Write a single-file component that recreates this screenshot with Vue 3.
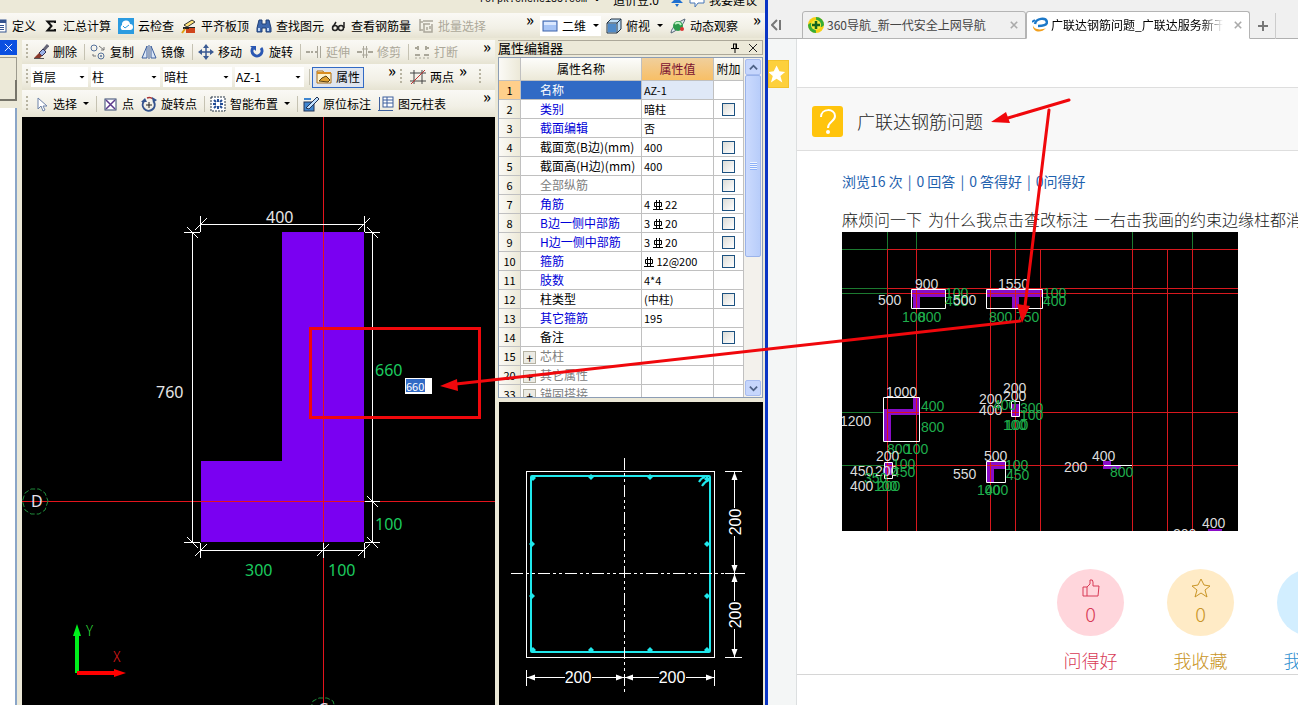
<template>
  <div class="desktop">
    <section class="cad">
      <header class="title-strip">
        <span class="host">forpk.chenei85.com</span>
        <span>·</span>
        <span class="beans">造价豆:0</span>
        <svg class="icon" viewBox="0 0 16 16" v-html="icons.bell"></svg>
        <svg class="icon" viewBox="0 0 16 16" v-html="icons.bubble"></svg>
        <span>我要建议</span>
      </header>

      <div class="main-bar">
        <div class="toolbar first-bar">
          <button v-for="b in mainTools" :key="b.text" class="tool" :disabled="b.off">
            <svg class="icon" viewBox="0 0 16 16" v-html="icons[b.icon]"></svg>{{ b.text }}
          </button>
          <button class="more" aria-label="更多命令">»</button>
        </div>
        <div class="toolbar view-bar">
          <button class="tool view-mode">
            <svg class="icon" viewBox="0 0 16 16" v-html="icons.plane"></svg>二维<i class="caret"></i>
          </button>
          <button class="tool">
            <svg class="icon" viewBox="0 0 16 16" v-html="icons.cube"></svg>俯视<i class="caret"></i>
          </button>
          <button class="tool">
            <svg class="icon" viewBox="0 0 16 16" v-html="icons.orbit"></svg>动态观察
          </button>
          <button class="more" aria-label="更多视图">»</button>
        </div>
      </div>

      <div class="body">
        <aside class="dock">
          <button class="dock-close" aria-label="关闭">
            <svg viewBox="0 0 10 10"><path d="M1 1l8 8M9 1l-8 8" stroke="#fff" fill="none" /></svg>
          </button>
          <div class="dock-head"></div>
          <div class="dock-tab"></div>
          <div class="dock-list"></div>
        </aside>

        <div class="work">
          <div class="toolbar edit-bar">
            <i class="grip"></i>
            <template v-for="(b, i) in editTools" :key="i">
              <i v-if="b.sep" class="sep"></i>
              <button v-else class="tool" :disabled="b.off">
                <svg class="icon" viewBox="0 0 16 16" v-html="icons[b.icon]"></svg>{{ b.text }}
              </button>
            </template>
            <button class="more" aria-label="更多编辑">»</button>
          </div>

          <div class="toolbar pick-bar">
            <i class="grip"></i>
            <label v-for="p in pickers" :key="p.label" class="pick" :class="{ narrow: p.narrow }">
              <select v-model="p.value" :aria-label="p.label">
                <option>{{ p.value }}</option>
              </select>
            </label>
            <i class="sep"></i>
            <button class="tool pressed">
              <svg class="icon" viewBox="0 0 16 16" v-html="icons.props"></svg>属性
            </button>
            <button class="more inline" aria-label="更多构件">»</button>
            <i class="grip"></i>
            <button class="tool two-point">
              <svg class="icon" viewBox="0 0 16 16" v-html="icons.axis"></svg>两点
            </button>
            <button class="more tight" aria-label="更多轴线">»</button>
            <i class="grip"></i>
          </div>

          <div class="toolbar draw-bar">
            <i class="grip"></i>
            <template v-for="(b, i) in drawTools" :key="i">
              <i v-if="b.sep" class="sep"></i>
              <button v-else class="tool">
                <svg class="icon" viewBox="0 0 16 16" v-html="icons[b.icon]"></svg>{{ b.text }}<i v-if="b.menu" class="caret"></i>
              </button>
            </template>
            <button class="more" aria-label="更多绘图">»</button>
          </div>

          <div class="canvas">
            <svg class="fill" viewBox="22 117 473 588">
              <polygon points="282,232 364,232 364,542 201,542 201,461 282,461" fill="#7a00f2" />
              <path d="M323 117h1v588h-1zM22 501h473v1H22z" fill="#e4141c" />
              <g stroke="#fff" fill="none">
                <path d="M200.500 224.500H364.500M192.500 232V542M372.500 232V542M200.500 550.500H364.500" />
                <path d="M200.500 216v16M364.500 216v16M184 232.500h16M365 232.500h15M184 542.500h16M365 542.500h15M365 501.500h15M200.500 543v15M323.500 543v15M364.500 543v15" />
                <path v-for="(t, i) in slashes" :key="i" :d="t" />
              </g>
              <g class="dims">
                <text v-for="(d, i) in columnDims" :key="i" :x="d[0]" :y="d[1]" :class="d[3]">{{ d[2] }}</text>
              </g>
              <g fill="none" stroke="#1f8a3a" stroke-dasharray="5 2">
                <polygon points="48,501 45,510 39,514 31,514 25,510 22.500,501 25,493 31,489 39,489 45,493" />
                <polygon points="336,711 333,701 327,698 319,698 313,701 310,711" />
              </g>
              <text class="axis-name" x="31" y="507">D</text>
              <text class="axis-name" x="318" y="715">C</text>
              <path d="M77 673V634" stroke="#00f01c" stroke-width="4" />
              <path d="M77 624l4 12h-8z" fill="#00f01c" />
              <path d="M77 673h38" stroke="#f00" stroke-width="4" />
              <path d="M126 673l-12 4v-8z" fill="#f00" />
              <text class="ucs y" x="86" y="636">Y</text>
              <text class="ucs x" x="113" y="662">X</text>
            </svg>
            <input v-model="offset" class="offset" aria-label="标注值" />
          </div>
        </div>

        <div class="side">
          <div class="side-title">
            <span>属性编辑器</span>
            <button aria-label="固定">
              <svg viewBox="0 0 10 10"><path d="M3 1h4M3.500 1v4M6.500 1v4M6 1v4M1 5.500h8M5 6v4" stroke="#000" fill="none" /></svg>
            </button>
            <button aria-label="关闭面板">
              <svg viewBox="0 0 10 10"><path d="M1 1l8 8M9 1l-8 8" stroke="#222" fill="none" /></svg>
            </button>
          </div>

          <div class="prop-box">
            <div class="prop-scroll">
              <table class="props">
                <thead>
                  <tr>
                    <th class="no"></th>
                    <th>属性名称</th>
                    <th class="val hot">属性值</th>
                    <th class="extra">附加</th>
                  </tr>
                </thead>
                <tbody>
                  <tr v-for="r in rows" :key="r.no" :class="{ current: r.no === 1 }">
                    <td class="no">{{ r.no }}</td>
                    <td class="name" :class="[r.tone, { group: r.group }]">
                      <button v-if="r.group" class="plus" aria-label="展开">+</button>{{ r.name }}
                    </td>
                    <td class="val">
                      <template v-if="r.bar">
                        {{ r.count }}
                        <svg class="rebar" viewBox="0 0 10 10"><path d="M1.500 2.500h7v4h-7zM3.500 0v9M6.500 0v9M0 9.500h10" stroke="#000" fill="none" /></svg>
                        {{ r.bar }}
                      </template>
                      <template v-else>{{ r.value }}</template>
                    </td>
                    <td class="extra"><input v-if="r.check" type="checkbox" :aria-label="r.name" /></td>
                  </tr>
                </tbody>
              </table>
            </div>
            <div class="scrollbar">
              <button aria-label="向上滚动"><svg viewBox="0 0 10 10"><path d="M1 7l4-4 4 4" stroke="#4d6185" stroke-width="2" fill="none" /></svg></button>
              <div class="thumb"></div>
              <button class="down" aria-label="向下滚动"><svg viewBox="0 0 10 10"><path d="M1 3l4 4 4-4" stroke="#4d6185" stroke-width="2" fill="none" /></svg></button>
            </div>
          </div>

          <div class="section-view">
            <svg class="fill" viewBox="499 402 264 303">
              <rect x="526.500" y="471.500" width="188" height="186" fill="none" stroke="#fff" />
              <rect x="531" y="476" width="179" height="176" rx="1" fill="none" stroke="#1fe8ec" stroke-width="2" />
              <path d="M624.500 458V693M511 573.500H748" stroke="#fff" stroke-dasharray="12 3 3 3 3 3" />
              <path d="M699 482q2-4 6-5M702 486q2-4 7-6" stroke="#1fe8ec" stroke-width="2" fill="none" />
              <path v-for="(p, i) in bars" :key="i" :d="`M${p[0]} ${p[1] - 3}l3 3-3 3-3-3z`" fill="#1fe8ec" />
              <path
                d="M725 471.500h17M725 657.500h17M725 573.500h17M734.500 472v36M734.500 536v65M734.500 629v28M526.500 670v16M714.500 670v16M527 677.500h38M592 677.500h67M686 677.500h28"
                stroke="#fff"
              />
              <path
                d="M734.500 472l3 8h-6zM734.500 573l3-8h-6zM734.500 574l3 8h-6zM734.500 657l3-8h-6zM527 677.500l8-3v6zM624 677.500l-8-3v6zM625 677.500l8-3v6zM714 677.500l-8-3v6z"
                fill="#fff"
              />
              <g class="section-dims">
                <text x="578" y="683">200</text>
                <text x="672" y="683">200</text>
                <text transform="translate(741 522) rotate(-90)">200</text>
                <text transform="translate(741 615) rotate(-90)">200</text>
              </g>
            </svg>
          </div>
        </div>
      </div>
    </section>

    <section class="browser">
      <nav class="tabs">
        <button class="collapse" aria-label="收起侧栏">
          <svg viewBox="0 0 10 12"><path d="M6 1L1 6l5 5M9 1v10" stroke="#777" stroke-width="2" fill="none" /></svg>
        </button>
        <div class="tab">
          <svg class="icon" viewBox="0 0 16 16" v-html="icons.nav360"></svg>
          <a href="#">360导航_新一代安全上网导航</a>
          <button aria-label="关闭标签"><svg viewBox="0 0 10 10"><path d="M1 1l8 8M9 1l-8 8" stroke="#aaa" stroke-width="2" /></svg></button>
        </div>
        <div class="tab active">
          <svg class="icon" viewBox="0 0 16 16" v-html="icons.glodon"></svg>
          <a href="#">广联达钢筋问题_广联达服务新干线</a>
          <button aria-label="关闭标签"><svg viewBox="0 0 10 10"><path d="M1 1l8 8M9 1l-8 8" stroke="#aaa" stroke-width="2" /></svg></button>
        </div>
        <button class="new-tab" aria-label="新标签">
          <svg viewBox="0 0 10 10"><path d="M5 0v10M0 5h10" stroke="#777" stroke-width="2" /></svg>
        </button>
      </nav>

      <div class="page">
        <aside class="fav">
          <button aria-label="收藏">
            <svg viewBox="0 0 20 20"><path d="M8 1l3 6 6 1-5 4 2 7-6-4-6 4 2-7-5-4 6-1z" fill="#fff" /></svg>
          </button>
        </aside>
        <main class="thread">
          <div class="thread-head">
            <svg class="ask" viewBox="0 0 31 31">
              <rect width="31" height="31" rx="3" fill="#ffc40d" />
              <path d="M9 11c0-9 14-9 14-1 0 6-7 5-7 12" fill="none" stroke="#fff" stroke-width="2" />
              <circle cx="16" cy="26" r="2" fill="#fff" />
            </svg>
            <h1>广联达钢筋问题</h1>
          </div>
          <div class="thread-body">
            <div class="stats">
              <span>浏览16 次</span><span>|</span><span>0 回答</span><span>|</span><span>0 答得好</span><span>|</span><span>0问得好</span>
            </div>
            <p class="question">
              <span>麻烦问一下</span><span>为什么我点击查改标注</span><span>一右击我画的约束边缘柱都消失了</span>
            </p>
            <svg class="plan" viewBox="842 232 396 299">
              <rect x="842" y="232" width="396" height="299" fill="#000" />
              <path
                d="M842 249.500h45M842 288.500h45M842 293.500h45M842 412.500h45M842 465.500h45M887.500 232v17M916.500 232v17M1015.500 232v17M1132.500 232v17M1192.500 232v17"
                stroke="#1c7a30"
              />
              <g fill="#8a0cc8">
                <path d="M912 290h33v7h-25v11h-7v-11h-1zM987 290h55v7h-23v11h-7v-11h-25zM913 398h7v17h-29v26h-7v-32h29zM987 462h18v7h-11v13h-7zM1012 404h8v12h-8zM884 463h8v12h-8zM1103 461h8v4h10v4h-18zM1208 529h14v2h-14z" />
              </g>
              <g fill="#d8181e">
                <rect v-for="y in planRows" :key="y" x="887" :y="y" width="351" height="1" />
                <rect v-for="x in planCols" :key="x" :x="x" y="249" width="1" height="282" />
              </g>
              <g fill="none" stroke="#fff">
                <path d="M911.500 289.500h34v19h-34zM986.500 289.500h56v19h-56zM883.500 397.500h36v44h-36zM986.500 461.500h19v21h-19zM1011.500 401.500h8v15h-8zM884.500 462.500h8v16h-8zM1104 465.500h28" />
              </g>
              <text v-for="(t, i) in planDims" :key="i" class="plan-dim" :class="t[3]" :x="t[0]" :y="t[1]">{{ t[2] }}</text>
            </svg>
            <div class="actions">
              <button v-for="a in actions" :key="a.label" class="action" :class="a.tone">
                <span class="disc">
                  <svg viewBox="0 0 20 20"><path :d="a.path" fill="none" stroke="currentColor" /></svg>
                  <span>{{ a.count }}</span>
                </span>
                <span class="label">{{ a.label }}</span>
              </button>
            </div>
          </div>
        </main>
      </div>
    </section>

    <svg class="marks" viewBox="0 0 1298 705" preserveAspectRatio="none">
      <g stroke="#f0080c" stroke-width="3" fill="none" stroke-linecap="round">
        <rect x="310.500" y="328.500" width="169" height="89" />
        <path d="M1069 100L1008 118M1049 110L1025 306M1020 321L456 384" />
      </g>
      <g fill="#f0080c">
        <path d="M991 122l15-10 4 11zM1022 323l-5-19 13 2zM440 386l17-7 1 12z" />
      </g>
    </svg>
  </div>
</template>

<script setup>
import { ref } from 'vue';

const offset = ref('660');

// 16x16 工具栏图标
const icons = {
  bell: '<path d="M2 11h12l-3-3V4H5v4z" fill="#1d6fd0"/><path d="M6 12h4l-2 3z" fill="#1d6fd0"/>',
  bubble: '<path d="M1 2h14v9H9l-3 4v-4H1z" fill="#fff" stroke="#4676b8"/>',
  define: '<rect x="1" y="2" width="13" height="12" fill="#fff" stroke="#35548f"/><path d="M1 3.500h13" stroke="#35548f" stroke-width="3"/><path d="M4 7.500h8M4 9.500h8M4 11.500h8" stroke="#35548f"/>',
  sum: '<path d="M12 5V3.500H4.500L8.500 8l-4 4.500H12V11" fill="none" stroke="#111" stroke-width="2"/>',
  cloud: '<rect width="16" height="16" fill="#2b9be0"/><path d="M4 12a3 3 0 010-5 4 4 0 018-1 3 3 0 010 6z" fill="#fff"/><path d="M5 8l2 2 4-3" fill="none" stroke="#2b9be0"/>',
  align: '<path d="M3 7l8-5 3 2-8 5z" fill="#ffe37a" stroke="#333"/><path d="M2 10h12" stroke="#222" stroke-width="2"/><path d="M5 15v-4h3v-1h6v5z" fill="#d0451b"/><path d="M1 15l3-4" stroke="#e0a010" stroke-width="2"/>',
  find: '<path d="M3 2h3v4h4V2h3l2 8v4h-5v-4H6v4H1v-4z" fill="#3d68ad" stroke="#1f3e76"/><path d="M3 10v3M12 10v3" stroke="#b9d2f5" stroke-width="2"/>',
  glasses: '<circle cx="4" cy="10" r="2.500" fill="none" stroke="#222" stroke-width="1.500"/><circle cx="10" cy="10" r="2.500" fill="none" stroke="#222" stroke-width="1.500"/><path d="M2 9l3-5M13 10V4" stroke="#222" fill="none" stroke-width="1.500"/>',
  batch: '<path d="M2 1v12M5 3h10M5 6h7M2 4h3M2 12h3M6 6v8h8V6M9 9v3M12 8v3" fill="none" stroke="#aaa79a" stroke-width="1.500"/>',
  plane: '<rect x="1" y="3" width="14" height="10" fill="#a7c4f5" stroke="#3c62a8"/><path d="M2 4h12v3H2z" fill="#dbe8ff"/>',
  cube: '<path d="M1 5l4-4h10v10l-4 4H1z" fill="#bcdcf5" stroke="#234"/><path d="M1 5h10v10M11 5l4-4" fill="none" stroke="#234"/><path d="M2 6h8v8H2z" fill="#4f8ac8"/>',
  orbit: '<path d="M1 15C1 9 10 3 15 1 14 7 6 13 1 15z" fill="#dfe8ee" stroke="#567"/><circle cx="8" cy="8" r="5" fill="#2c9a4b"/><path d="M5 6q4-3 6 1" stroke="#bff0c4" fill="none" stroke-width="2"/><circle cx="12" cy="11" r="2" fill="#d33"/>',
  erase: '<path d="M15 1L9 8" stroke="#667" stroke-width="3"/><path d="M10 5l3 3-4 4-3-3z" fill="#9bb2e6" stroke="#335"/><path d="M6 9l3 3-2 2H1z" fill="#8a3a2a"/><path d="M1 14.500h10" stroke="#555"/>',
  copy: '<circle cx="4" cy="4" r="3" fill="none" stroke="#56729c"/><circle cx="11" cy="12" r="3" fill="none" stroke="#56729c"/><circle cx="11" cy="12" r="1" fill="#56729c"/><path d="M9 2l5 4M14 3v3h-3M3 10v2h3" stroke="#777" fill="none"/>',
  mirror: '<path d="M6 2v12H1zM10 2v12h5z" fill="#dbe7f7" stroke="#3d5f9c"/><path d="M8 1v14" stroke="#3d5f9c"/>',
  move: '<path d="M8 2v12M2 8h12" stroke="#3a5a92" stroke-width="1.500"/><path d="M8 0l3 4H5zM8 16l3-4H5zM0 8l4-3v6zM16 8l-4-3v6z" fill="#3a5a92"/>',
  rotate: '<path d="M4 4a5 5 0 108 0" fill="none" stroke="#2a57b2" stroke-width="3"/><path d="M1 2h6v5z" fill="#2a57b2"/>',
  extend: '<path d="M0 8h4M5 8h2M9 8h2" stroke="#aaa79a" stroke-width="2"/><path d="M11.500 2v12M14.500 2v12" stroke="#aaa79a"/>',
  trim: '<path d="M0 8h5M11 8h5" stroke="#aaa79a" stroke-width="2"/><path d="M6.500 2v12M9.500 2v12M5 5h6M5 11h6" stroke="#aaa79a"/>',
  cut: '<path d="M1 4h4M11 4h4M1 11h5M10 11h5M4 2v4M12 2v4" stroke="#aaa79a" stroke-width="2"/><path d="M1 14h14" stroke="#aaa79a" stroke-dasharray="2 2"/>',
  props: '<path d="M1 2h6l1 2h7v10H1z" fill="#fff3cc" stroke="#a86c18"/><path d="M1 4h14" stroke="#d98d20" stroke-width="2"/><path d="M3 12l3-3 4-2 4 4-2 2z" fill="#e0a230" stroke="#5b4010"/>',
  axis: '<path d="M4 1v14M12 1v14M0 4h16M0 12h16" stroke="#444"/><path d="M1 15L15 1" stroke="#b33"/>',
  cursor: '<path d="M5 2v11l3-3 2 5 2-1-2-4h4z" fill="#fff" stroke="#6d82a8"/>',
  point: '<rect x="3" y="3" width="11" height="11" fill="#fff" stroke="#33456e"/><path d="M4 4l9 9M13 4l-9 9" stroke="#5d3a8c" stroke-width="1.500"/>',
  spin: '<path d="M3 5a6 6 0 1010 1" fill="none" stroke="#35548f" stroke-width="2"/><path d="M6 2a6 6 0 016 1" fill="none" stroke="#a33" stroke-width="1.500"/><path d="M0 6l4-4 2 4zM11 1l5 3-4 3z" fill="#35548f"/><path d="M8 6v6M5 9h6" stroke="#222"/>',
  smart: '<rect x="1" y="1" width="14" height="14" fill="#fff" stroke="#234" stroke-dasharray="2 1"/><path d="M8 3v3M8 10v3M3 8h3M10 8h3M4 4l2 2M12 4l-2 2M4 12l2-2M12 12l-2-2" stroke="#234d96" stroke-width="2"/>',
  note: '<rect x="1" y="6" width="10" height="9" fill="#3f86d0" stroke="#235"/><path d="M3 12L14 1l2 2L6 13z" fill="#bfe0ff" stroke="#235"/><path d="M1 3h7" stroke="#3f86d0" stroke-width="2"/>',
  sheet: '<rect x="5" y="1" width="10" height="10" fill="#fff" stroke="#3d5f9c"/><path d="M5 4h10M5 7h10M9 1v10" stroke="#3d5f9c"/><path d="M1.500 1v14M0 14.500h15" stroke="#3d5f9c"/>',
  nav360: '<circle cx="8" cy="8" r="8" fill="#f8cf14"/><path d="M8 0a8 8 0 018 8c-4 5-8 0-8-8zM8 16a8 8 0 01-8-8c4-5 8 0 8 8z" fill="#35ac37"/><circle cx="8" cy="8" r="5" fill="#f6ec3c"/><path d="M8 4v8M4 8h8" stroke="#14651c" stroke-width="2.500"/>',
  glodon: '<path d="M3 7C4 1 14 0 15 5c0 3-5 4-9 4" fill="none" stroke="#1c78c8" stroke-width="2.500"/><path d="M1 8c0 4 7 6 13 3-5 6-14 4-13-3z" fill="#f2a01e"/><path d="M0 5l3-2" stroke="#1c78c8" stroke-width="2"/>'
};

const mainTools = [
  { icon: 'define', text: '定义' },
  { icon: 'sum', text: '汇总计算' },
  { icon: 'cloud', text: '云检查' },
  { icon: 'align', text: '平齐板顶' },
  { icon: 'find', text: '查找图元' },
  { icon: 'glasses', text: '查看钢筋量' },
  { icon: 'batch', text: '批量选择', off: true }
];

const editTools = [
  { icon: 'erase', text: '删除' },
  { sep: true },
  { icon: 'copy', text: '复制' },
  { icon: 'mirror', text: '镜像' },
  { sep: true },
  { icon: 'move', text: '移动' },
  { icon: 'rotate', text: '旋转' },
  { sep: true },
  { icon: 'extend', text: '延伸', off: true },
  { icon: 'trim', text: '修剪', off: true },
  { sep: true },
  { icon: 'cut', text: '打断', off: true }
];

const drawTools = [
  { icon: 'cursor', text: '选择', menu: true },
  { sep: true },
  { icon: 'point', text: '点' },
  { icon: 'spin', text: '旋转点' },
  { sep: true },
  { icon: 'smart', text: '智能布置', menu: true },
  { sep: true },
  { icon: 'note', text: '原位标注' },
  { icon: 'sheet', text: '图元柱表' }
];

const pickers = ref([
  { label: '楼层', value: '首层', narrow: true },
  { label: '构件类型', value: '柱' },
  { label: '构件类别', value: '暗柱' },
  { label: '构件名称', value: 'AZ-1' }
]);

const rows = [
  { no: 1, name: '名称', value: 'AZ-1' },
  { no: 2, name: '类别', value: '暗柱', tone: 'blue', check: true },
  { no: 3, name: '截面编辑', value: '否', tone: 'blue' },
  { no: 4, name: '截面宽(B边)(mm)', value: '400', check: true },
  { no: 5, name: '截面高(H边)(mm)', value: '400', check: true },
  { no: 6, name: '全部纵筋', value: '', tone: 'gray', check: true },
  { no: 7, name: '角筋', count: '4', bar: '22', tone: 'blue', check: true },
  { no: 8, name: 'B边一侧中部筋', count: '3', bar: '20', tone: 'blue', check: true },
  { no: 9, name: 'H边一侧中部筋', count: '3', bar: '20', tone: 'blue', check: true },
  { no: 10, name: '箍筋', count: '', bar: '12@200', tone: 'blue', check: true },
  { no: 11, name: '肢数', value: '4*4', tone: 'blue' },
  { no: 12, name: '柱类型', value: '(中柱)', check: true },
  { no: 13, name: '其它箍筋', value: '195', tone: 'blue' },
  { no: 14, name: '备注', value: '', check: true },
  { no: 15, name: '芯柱', value: '', tone: 'gray', group: true },
  { no: 20, name: '其它属性', value: '', tone: 'gray', group: true },
  { no: 33, name: '锚固搭接', value: '', tone: 'gray', group: true }
];

// 尺寸线端部斜线
const slashes = [
  'M195 230l12-12', 'M358 230l12-12',
  'M187 227l11 11', 'M367 227l11 11',
  'M187 537l11 11', 'M367 537l11 11', 'M367 496l11 11',
  'M195 556l12-12', 'M317 556l12-12', 'M358 556l12-12'
];

const columnDims = [
  [266, 223, '400', 'white'],
  [156, 398, '760', 'white'],
  [375, 376, '660', 'green'],
  [375, 530, '100', 'green'],
  [245, 576, '300', 'green'],
  [328, 576, '100', 'green']
];

const bars = [
  [533, 478], [591, 477], [650, 477], [707, 479],
  [532, 544], [532, 596], [707, 544], [707, 596],
  [533, 650], [591, 650], [650, 650], [707, 650]
];

// 轴网
const planRows = [249, 288, 293, 412, 465];
const planCols = [887, 916, 990, 1015, 1040, 1132, 1167, 1192];

const planDims = [
  [915, 289, '900', 'w'], [878, 305, '500', 'w'], [945, 298, '100', 'g'], [945, 306, '400', 'g'], [953, 305, '500', 'w'],
  [902, 322, '100', 'g'], [918, 322, '800', 'g'],
  [998, 289, '1550', 'w'], [1043, 298, '100', 'g'], [1043, 306, '400', 'g'], [989, 322, '800', 'g'], [1016, 322, '750', 'g'],
  [886, 397, '1000', 'w'], [921, 411, '400', 'g'], [921, 432, '800', 'g'], [840, 426, '1200', 'w'],
  [887, 454, '800', 'g'], [905, 454, '100', 'g'],
  [876, 461, '200', 'w'], [850, 476, '450', 'w'], [875, 476, '200', 'w'], [892, 469, '100', 'g'], [892, 477, '450', 'g'],
  [864, 483, '350', 'g'], [850, 491, '400', 'w'], [874, 491, '100', 'g'], [877, 491, '200', 'g'],
  [984, 461, '500', 'w'], [953, 479, '550', 'w'], [1005, 470, '100', 'g'], [1006, 480, '450', 'g'],
  [977, 495, '100', 'g'], [985, 495, '400', 'g'],
  [1003, 393, '200', 'w'], [1003, 401, '200', 'w'], [979, 404, '200', 'w'], [979, 415, '400', 'w'],
  [993, 410, '400', 'g'], [1020, 413, '300', 'g'], [1020, 420, '100', 'g'], [1003, 430, '100', 'g'], [1005, 430, '100', 'g'],
  [1092, 461, '400', 'w'], [1064, 472, '200', 'w'], [1110, 477, '800', 'g'],
  [1202, 528, '400', 'w'], [1173, 539, '200', 'w']
];

const actions = [
  { label: '问得好', count: 0, tone: 'pink', path: 'M2 9h4v9H2zM6 9l3-3V2q3-1 3 2v4h6l-1 10H6' },
  { label: '我收藏', count: 0, tone: 'gold', path: 'M10 1l3 6 6 1-5 4 2 7-6-4-6 4 2-7-5-4 6-1z' },
  { label: '我回答', count: 0, tone: 'sky', path: 'M2 18l2-5L14 3l3 3L7 16z' }
];
</script>

<style>
body {
  overflow: hidden;
}
</style>

<style scoped>
* {
  box-sizing: border-box;
}

button,
input,
select {
  margin: 0;
  padding: 0;
  border: 0;
  background: none;
  color: inherit;
  font: inherit;
}

.desktop {
  position: relative;
  display: grid;
  grid-template-columns: 768fr 530fr;
  height: 100vh;
  overflow: hidden;
  font-family: "Noto Sans CJK SC", sans-serif;
  font-size: 12px;
  line-height: 16px;
  color: #000;
}

.marks {
  position: absolute;
  inset: 0;
  width: 100%;
  height: 100%;
  pointer-events: none;
}

.icon {
  flex: none;
  width: 16px;
  height: 16px;
}

.fill {
  display: block;
  width: 100%;
  height: 100%;
}

/* CAD 窗口 */
.cad {
  display: flex;
  flex-direction: column;
  min-width: 0;
  overflow: hidden;
  background: #ece9d8;
  border-right: 3px solid #0a35c4;
}

.title-strip {
  display: flex;
  align-items: flex-end;
  justify-content: flex-end;
  gap: 4px;
  height: 8px;
  margin-bottom: 5px;
  padding-right: 8px;
  overflow: hidden;
  white-space: nowrap;
}

.title-strip .host {
  font-family: "Liberation Mono", monospace;
  font-size: 10px;
}

.beans {
  margin: 0 6px;
}

.main-bar {
  display: grid;
  grid-template-columns: 1fr 225px;
  height: 25px;
  margin-bottom: 2px;
}

.toolbar {
  display: flex;
  align-items: center;
  min-width: 0;
  overflow: hidden;
  white-space: nowrap;
  background: linear-gradient(#faf9f5, #f2f0e6 60%, #e6e3d2);
}

.first-bar {
  padding-right: 6px;
}

.first-bar .tool:first-child {
  margin-left: -8px;
}

.view-bar {
  padding-right: 4px;
}

.tool {
  display: flex;
  flex: none;
  align-items: center;
  gap: 4px;
  margin-right: 7px;
}

.tool:disabled {
  color: #aca899;
}

.view-mode {
  height: 20px;
  margin-right: 5px;
  padding: 0 2px;
  background: #fff;
}

.caret {
  flex: none;
  width: 6px;
  height: 3px;
  margin-left: 3px;
  background: #000;
  clip-path: polygon(0 0, 100% 0, 50% 100%);
}

.draw-bar .caret {
  margin-left: 2px;
}

.more {
  flex: none;
  align-self: flex-start;
  margin-left: auto;
  font-size: 16px;
  font-weight: 500;
  line-height: 12px;
}

.more.inline {
  margin-left: 17px;
}

.more.tight {
  margin: 0 8px 0 -2px;
}

.grip {
  flex: none;
  width: 2px;
  height: 16px;
  margin: 0 5px 0 4px;
  background: repeating-linear-gradient(#b8b4a2 0 2px, transparent 2px 4px);
}

.sep {
  flex: none;
  width: 1px;
  height: 16px;
  margin-right: 5px;
  background: #c5c2b2;
}

.edit-bar {
  height: 24px;
  padding-right: 4px;
}

.pick-bar {
  height: 26px;
}

.draw-bar {
  height: 27px;
  padding-right: 4px;
}

.pick-bar .grip {
  margin-right: 3px;
}

.pick-bar .sep {
  margin: 0 2px;
}

.pick {
  display: grid;
  flex: 0 0 69px;
  align-items: center;
  height: 20px;
  margin-right: 3px;
  background: #fff;
}

.pick.narrow {
  flex-basis: 57px;
}

.pick select {
  grid-area: 1 / 1;
  width: 100%;
  padding-left: 1px;
  appearance: none;
  outline: 0;
}

.pick::after {
  content: "";
  grid-area: 1 / 1;
  justify-self: end;
  width: 6px;
  height: 3px;
  margin-right: 3px;
  background: #000;
  clip-path: polygon(0 0, 100% 0, 50% 100%);
  pointer-events: none;
}

.pressed {
  height: 21px;
  padding: 0 3px;
  background: #dfe5ef;
  border: 1px solid #316ac5;
}

.two-point {
  margin-left: 5px;
}

.body {
  display: grid;
  flex: 1;
  grid-template-columns: 22px 1fr 267px;
  min-height: 0;
}

.dock {
  display: flex;
  flex-direction: column;
  padding-right: 5px;
}

.dock-close {
  display: flex;
  align-items: center;
  justify-content: center;
  height: 15px;
  background: #0a4fe0;
}

.dock-close svg {
  width: 9px;
  height: 9px;
}

.dock-head {
  height: 23px;
  margin-top: 2px;
  border: solid #9d9b8e;
  border-width: 1px 1px 0 0;
}

.dock-tab {
  height: 21px;
  border: solid #77756a;
  border-width: 0 2px 2px 0;
}

.dock-list {
  flex: 1;
  margin-top: 7px;
  background: #fff;
  border-right: 2px solid #8aa5c8;
}

.work {
  display: flex;
  flex-direction: column;
  min-width: 0;
  padding-right: 3px;
}

.canvas {
  position: relative;
  flex: 1;
  min-height: 0;
  overflow: hidden;
  background: #000;
}

.dims text {
  font-family: "Noto Sans", sans-serif;
  font-size: 16px;
}

.white {
  fill: #e6e6e6;
}

.green {
  fill: #1ccb5f;
}

.axis-name {
  font-family: "Noto Sans", sans-serif;
  font-size: 16px;
  fill: #e6e0ea;
}

.ucs {
  font-family: "Noto Sans CJK SC", sans-serif;
  font-size: 14px;
  font-weight: 300;
}

.ucs.y {
  fill: #2fdc3a;
}

.ucs.x {
  fill: #e01a1a;
}

.offset {
  position: absolute;
  top: 261px;
  left: 383px;
  width: 27px;
  height: 16px;
  padding-left: 1px;
  font-size: 11px;
  color: #fff;
  background: linear-gradient(#316ac5, #316ac5) 1px 1px / 19px 13px no-repeat #fff;
}

/* 属性编辑器 */
.side {
  display: grid;
  grid-template-rows: 15px 347fr 303fr;
  min-height: 0;
  padding-right: 2px;
}

.side-title {
  display: flex;
  align-items: center;
  gap: 8px;
  padding-right: 4px;
  font-size: 13px;
  line-height: 13px;
  border: 1px solid #aca899;
  border-left: 0;
}

.side-title span {
  flex: 1;
}

.side-title button {
  display: flex;
}

.side-title svg {
  width: 10px;
  height: 10px;
}

.prop-box {
  display: flex;
  min-height: 0;
  margin: 2px 0 4px;
  overflow: hidden;
  background: #fff;
  border: 1px solid #8c9db5;
}

.prop-scroll {
  flex: 1;
  overflow: hidden;
}

.props {
  width: 100%;
  table-layout: fixed;
  border-collapse: separate;
  border-spacing: 0;
}

.props th,
.props td {
  height: 19px;
  padding: 0;
  overflow: hidden;
  font-weight: 400;
  line-height: 16px;
  white-space: nowrap;
  border: solid #c0c0c0;
  border-width: 0 1px 1px 0;
}

.props th {
  height: 23px;
  background: linear-gradient(#fdfdfb, #ece9d8);
}

.props .no {
  width: 22px;
  font-size: 11px;
  text-align: center;
  background: linear-gradient(90deg, #fbfaf6, #ece9d8);
}

.props .val {
  width: 72px;
}

.props td.val {
  padding-left: 2px;
  font-size: 11px;
}

.props .extra {
  width: 30px;
  text-align: center;
}

.props th.hot {
  color: #7a1030;
  background: linear-gradient(#f0cf9c, #f8bf66);
}

.props .name {
  padding-left: 19px;
}

.props .name.group {
  padding-left: 2px;
}

.blue {
  color: #0000d8;
}

.gray {
  color: #808080;
}

.props .current .no {
  background: #ffcf8b;
}

.current .name {
  color: #fff;
  background: #316ac5;
}

.current .val {
  background: #dfe8f7;
}

.plus {
  width: 13px;
  height: 13px;
  margin-right: 4px;
  font-size: 12px;
  line-height: 10px;
  color: #000;
  vertical-align: middle;
  background: #ecebe4;
  border: 1px solid #b4b1a2;
}

.rebar {
  width: 10px;
  height: 10px;
  vertical-align: -1px;
}

.props input {
  display: block;
  width: 13px;
  height: 13px;
  margin: 0 auto;
  appearance: none;
  background: linear-gradient(135deg, #dcdcd7, #fff);
  border: 1px solid #1c5180;
}

.scrollbar {
  display: flex;
  flex: 0 0 18px;
  flex-direction: column;
  padding: 1px;
  background: #f3f1ec;
}

.scrollbar button {
  display: flex;
  align-items: center;
  justify-content: center;
  height: 16px;
  background: #c6d6fc;
  border: 1px solid #a8bdf0;
  border-radius: 2px;
}

.scrollbar svg {
  width: 9px;
  height: 9px;
}

.scrollbar .down {
  margin-top: auto;
}

.thumb {
  flex: 0 1 182px;
  background: repeating-linear-gradient(#eef4fe 0 1px, #8cb0f8 1px 2px) center / 7px 8px no-repeat, linear-gradient(90deg, #cbdafd, #b8cdfa);
  border: 1px solid #9ab3ea;
  border-radius: 2px;
}

.section-view {
  min-height: 0;
  margin: 0 0 0 1px;
  background: #000;
}

.section-dims text {
  font-family: "Liberation Sans", sans-serif;
  font-size: 16px;
  fill: #fff;
  text-anchor: middle;
}

/* 浏览器窗口 */
.browser {
  display: flex;
  flex-direction: column;
  min-width: 0;
  overflow: hidden;
  background: #fff;
}

.tabs {
  display: flex;
  align-items: flex-end;
  height: 39px;
  background: #f0f0f0;
  box-shadow: inset 0 -1px #b0b0b0;
}

.collapse {
  flex: none;
  width: 34px;
  height: 28px;
  padding-left: 3px;
  text-align: left;
}

.collapse svg {
  display: block;
  width: 10px;
  height: 12px;
}

.tab {
  display: flex;
  flex: 0 1 224px;
  align-items: center;
  gap: 3px;
  min-width: 0;
  height: 28px;
  padding: 0 7px 0 5px;
  border: 1px solid #b4b4b4;
  border-radius: 3px 3px 0 0;
}

.tab.active {
  background: #fff;
  border-bottom-color: #fff;
}

.tab a {
  flex: 1;
  min-width: 0;
  overflow: hidden;
  color: #444;
  white-space: nowrap;
  text-decoration: none;
}

.tab.active a {
  color: #000;
  mask-image: linear-gradient(90deg, #000 88%, transparent);
}

.tab button {
  display: flex;
  margin-left: 8px;
}

.tab button svg {
  width: 8px;
  height: 8px;
}

.new-tab {
  display: flex;
  flex: none;
  align-items: center;
  width: 26px;
  height: 26px;
  padding-left: 8px;
  border-right: 1px solid #ccc;
}

.new-tab svg {
  width: 10px;
  height: 10px;
}

.page {
  display: grid;
  flex: 1;
  grid-template-columns: 29px 1fr;
  min-height: 0;
}

.fav {
  padding-top: 21px;
  background: #f4f6f6;
  border-right: 1px solid #dcdfe0;
}

.fav button {
  display: flex;
  align-items: center;
  width: 21px;
  height: 28px;
  background: #fdd03c;
  border: 1px solid #f2c22c;
}

.fav svg {
  width: 20px;
  height: 20px;
}

.thread {
  min-width: 0;
  padding-top: 48px;
  overflow: hidden;
  white-space: nowrap;
}

.thread-head {
  display: flex;
  align-items: center;
  gap: 14px;
  height: 64px;
  padding: 4px 15px 0;
  background: #f8f8f8;
  border: solid #dedede;
  border-width: 1px 0;
}

.ask {
  flex: none;
  width: 31px;
  height: 31px;
}

.thread-head h1 {
  margin: 0;
  font-size: 18px;
  font-weight: 300;
  line-height: 28px;
  color: #222;
}

.thread-body {
  padding: 20px 0 2px 45px;
  border-bottom: 1px solid #d6d6d6;
}

.stats {
  display: flex;
  gap: 5px;
  font-size: 14px;
  line-height: 20px;
  color: #1f62ae;
}

.question {
  display: flex;
  gap: 6px;
  margin: 18px 0 3px;
  font-size: 16px;
  font-weight: 300;
  line-height: 20px;
  color: #222;
}

.plan {
  display: block;
  width: 396px;
  max-width: 100%;
}

.plan-dim {
  font-family: "Liberation Sans", sans-serif;
  font-size: 14px;
}

.plan-dim.w {
  fill: #dcdcdc;
}

.plan-dim.g {
  fill: #1fae4c;
}

.actions {
  display: flex;
  gap: 43px;
  margin-top: 38px;
  padding-left: 215px;
}

.action {
  display: flex;
  flex: none;
  flex-direction: column;
  gap: 12px;
  align-items: center;
}

.disc {
  display: flex;
  flex-direction: column;
  align-items: center;
  width: 67px;
  height: 67px;
  padding-top: 9px;
  font-size: 20px;
  line-height: 32px;
  border-radius: 50%;
}

.disc svg {
  flex: none;
  width: 20px;
  height: 20px;
}

.action .label {
  font-size: 18px;
  font-weight: 300;
  line-height: 24px;
}

.disc span {
  font-weight: 300;
}

.pink {
  color: #d83a56;
}

.pink .disc {
  background: #ffd6dc;
}

.gold {
  color: #c99526;
}

.gold .disc {
  background: #ffebc6;
}

.sky {
  color: #2f8fd0;
}

.sky .disc {
  background: #d2eeff;
}
</style>
